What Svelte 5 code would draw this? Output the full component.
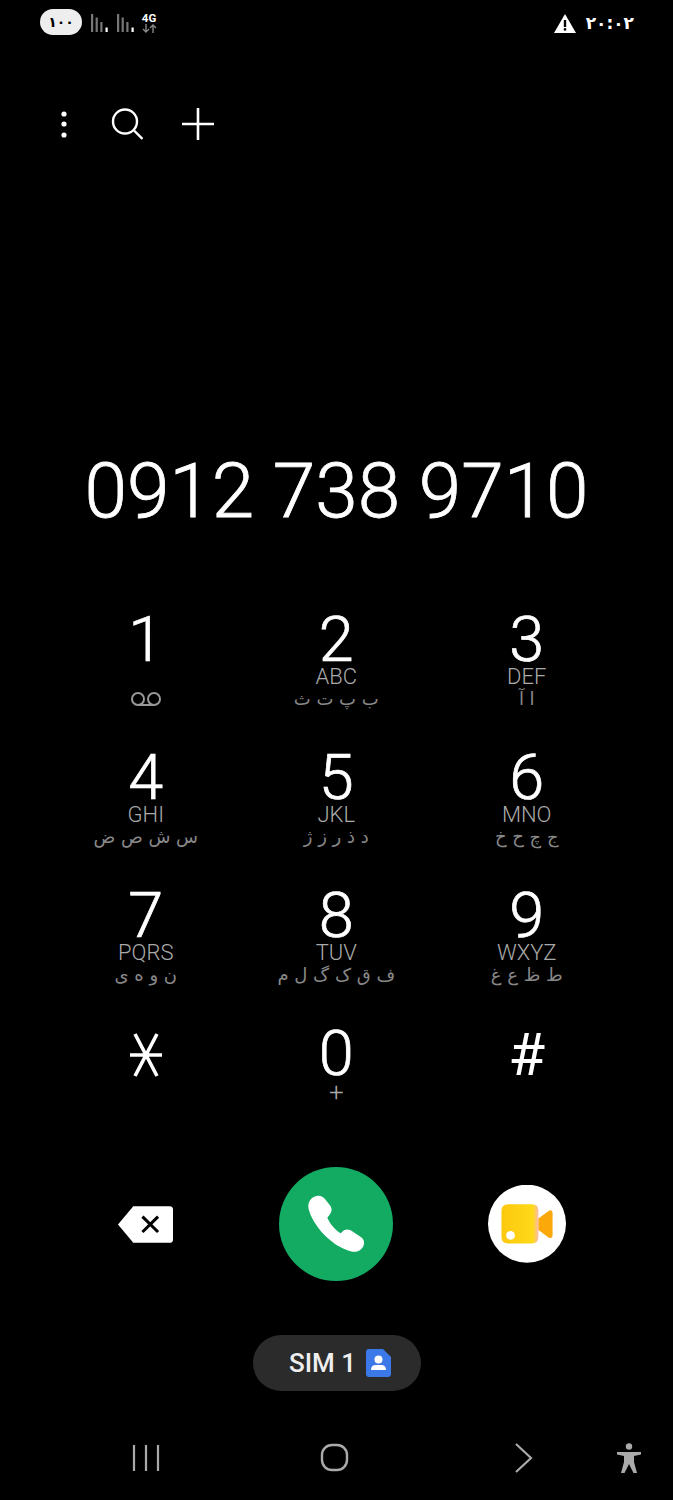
<script>
	const keys = [
		{ digit: "1", letters: "", fa: "", voicemail: true },
		{ digit: "2", letters: "ABC", fa: "ب پ ت ث" },
		{ digit: "3", letters: "DEF", fa: "ا آ" },
		{ digit: "4", letters: "GHI", fa: "س ش ص ض" },
		{ digit: "5", letters: "JKL", fa: "د ذ ر ز ژ" },
		{ digit: "6", letters: "MNO", fa: "ج چ ح خ" },
		{ digit: "7", letters: "PQRS", fa: "ن و ه ی" },
		{ digit: "8", letters: "TUV", fa: "ف ق ک گ ل م" },
		{ digit: "9", letters: "WXYZ", fa: "ط ظ ع غ" }
	];

	const signalBars = [
		{ x: 0, y: 0, h: 18, fill: "#777" },
		{ x: 4.6, y: 3.5, h: 14.5, fill: "#777" },
		{ x: 9.3, y: 8, h: 10, fill: "#777" },
		{ x: 14.5, y: 13.5, h: 4.5, fill: "#fff" }
	];
</script>

<div class="screen">
	<header class="status">
		<div class="status-left">
			<span class="battery">۱۰۰</span>
			{#each [0, 1] as sim}
				<svg class="signal" width="18" height="18" viewBox="0 0 18 18" data-sim={sim}>
					{#each signalBars as bar}
						<rect x={bar.x} y={bar.y} width="2.2" height={bar.h} fill={bar.fill} />
					{/each}
				</svg>
			{/each}
			<div class="network">
				<span>4G</span>
				<svg width="15" height="9" viewBox="0 0 15 9" fill="none" stroke="#888" stroke-width="1.4">
					<path d="M4 0v8M1 5l3 3 3-3" />
					<path d="M11 9V1M8 4l3-3 3 3" />
				</svg>
			</div>
		</div>
		<div class="status-right">
			<svg width="22" height="19" viewBox="0 0 22 19">
				<path d="M11 0 22 19H0z" fill="#fff" />
				<rect x="9.8" y="6" width="2.4" height="7" fill="#000" />
				<rect x="9.8" y="14.2" width="2.4" height="2.4" fill="#000" />
			</svg>
			<span class="clock">۲۰:۰۲</span>
		</div>
	</header>

	<div class="toolbar">
		<svg width="10" height="28" viewBox="0 0 10 28" fill="#fff">
			<circle cx="5" cy="4" r="2.6" />
			<circle cx="5" cy="14" r="2.6" />
			<circle cx="5" cy="25" r="2.6" />
		</svg>
		<svg class="search" width="32" height="32" viewBox="0 0 32 32" fill="none" stroke="#fff" stroke-width="2.4">
			<circle cx="14" cy="13.5" r="12" />
			<path d="M23 22.5 31.5 31" />
		</svg>
		<svg class="plus" width="32" height="32" viewBox="0 0 32 32" fill="none" stroke="#fff" stroke-width="2.6">
			<path d="M16 0v32M0 16h32" />
		</svg>
	</div>

	<div class="number">0912 738 9710</div>

	<div class="keypad">
		{#each keys as key}
			<div class="key">
				<span class="digit">{key.digit}</span>
				<span class="letters">{key.letters}</span>
				{#if key.voicemail}
					<span class="fa">
						<svg width="32" height="14" viewBox="0 0 32 14" fill="none" stroke="#999" stroke-width="2">
							<circle cx="8" cy="7" r="6" />
							<circle cx="24" cy="7" r="6" />
							<path d="M8 13h16" />
						</svg>
					</span>
				{:else}
					<span class="fa" dir="rtl">{key.fa}</span>
				{/if}
			</div>
		{/each}
		<div class="key symbol">
			<svg width="34" height="44" viewBox="0 0 34 44" fill="none" stroke="#fff" stroke-width="3.6">
				<path d="M1 22h32M6 1l22 42M28 1 6 43" />
			</svg>
		</div>
		<div class="key">
			<span class="digit">0</span>
			<span class="letters plus-sign">+</span>
		</div>
		<div class="key symbol">
			<span class="hash">#</span>
		</div>
	</div>

	<div class="actions">
		<div class="action">
			<svg width="55" height="37" viewBox="55 140 162 108">
				<path d="M100 140H207q10 0 10 10V238q0 10-10 10H100L55 194z" fill="#fff" />
				<path d="M127 171 173 216M173 171 127 216" stroke="#000" stroke-width="9" fill="none" />
			</svg>
		</div>
		<div class="action">
			<svg width="114" height="114" viewBox="537 20 342 342">
				<circle cx="708" cy="191" r="171" fill="#13ab62" />
				<path
					d="M650 107C635 110 624 122 625 140C627 158 640 185 664 214C690 243 722 266 757 274C775 277 790 265 792 250C794 240 787 232 778 227L752 210C742 205 733 207 727 214L722 219C705 208 690 190 682 172L690 162C696 153 696 146 692 138L675 116C667 107 658 105 650 107z"
					fill="#fff"
				/>
			</svg>
		</div>
		<div class="action video">
			<svg width="78" height="78" viewBox="1165 78 232 232">
				<defs>
					<linearGradient id="body" x1="0" x2="1" y1="0" y2="0">
						<stop offset="0" stop-color="#fdc80e" />
						<stop offset="0.85" stop-color="#ffd91a" />
						<stop offset="1" stop-color="#fdbcb0" />
					</linearGradient>
				</defs>
				<circle cx="1281" cy="193" r="116" fill="#fff" />
				<path d="M1225 135H1296q19 0 19 19V233q0 19-19 19H1225q-20 0-20-20V155q0-20 20-20z" fill="url(#body)" />
				<path d="M1315 178 1345 155q12-6 12 8V226q0 14-12 8L1315 212z" fill="#fba90a" />
				<circle cx="1232" cy="228" r="13" fill="#fff" />
			</svg>
		</div>
	</div>

	<div class="sim-row">
		<div class="sim">
			<span>SIM 1</span>
			<svg width="25" height="28" viewBox="0 0 25 28">
				<path d="M3 0H17L25 8V25q0 3-3 3H3q-3 0-3-3V3q0-3 3-3z" fill="#3b78e8" />
				<circle cx="12.5" cy="10.5" r="4" fill="#fff" />
				<path d="M5 21q0-5 5-5h5q5 0 5 5z" fill="#fff" />
			</svg>
		</div>
	</div>

	<nav class="nav">
		<div class="nav-item">
			<svg width="28" height="28" viewBox="0 0 28 28" stroke="#aaa" stroke-width="2.2" fill="none">
				<path d="M2 1v26M14 1v26M26 1v26" />
			</svg>
		</div>
		<div class="nav-item back">
			<svg width="30" height="30" viewBox="0 0 30 30" fill="none" stroke="#aaa" stroke-width="2.4">
				<rect x="2" y="2" width="25" height="25" rx="10" />
			</svg>
		</div>
		<div class="nav-item forward">
			<svg width="20" height="30" viewBox="0 0 20 30" fill="none" stroke="#aaa" stroke-width="2.2">
				<path d="M2 1 17 15 2 29" />
			</svg>
		</div>
		<div class="nav-item a11y">
			<svg width="24" height="30" viewBox="0 0 24 30" fill="#aaa">
				<circle cx="12" cy="3.5" r="3.2" />
				<path d="M0 9h24v2.6l-7 1.4v6l3 11h-3.500L12 21l-4.500 9H4l3-11v-6L0 11.600z" />
			</svg>
		</div>
	</nav>
</div>

<style>
	:global(body) {
		background: #000;
	}
	.screen {
		width: 673px;
		height: 1500px;
		background: #000;
		color: #fff;
		font-family: Roboto, "Liberation Sans", sans-serif;
		overflow: hidden;
	}
	.status {
		height: 48px;
		padding: 9px 39px 0 40px;
		box-sizing: border-box;
		display: flex;
		justify-content: space-between;
		align-items: flex-start;
	}
	.status-left {
		display: flex;
		align-items: flex-start;
	}
	.battery {
		width: 42px;
		height: 26px;
		border-radius: 13px;
		background: #eee;
		color: #000;
		font: bold 14px "DejaVu Sans", sans-serif;
		line-height: 26px;
		text-align: center;
	}
	.signal {
		margin: 5px 0 0 9px;
	}
	.signal + .signal {
		margin-left: 7.5px;
	}
	.network {
		margin: 3px 0 0 7px;
		display: flex;
		flex-direction: column;
		align-items: center;
		font-size: 11.5px;
		font-weight: 700;
		line-height: 12px;
	}
	.status-right {
		display: flex;
		align-items: center;
		gap: 10px;
		padding-top: 4px;
	}
	.clock {
		font: bold 17px "DejaVu Sans", sans-serif;
		line-height: 20px;
	}
	.toolbar {
		margin-top: 52px;
		height: 48px;
		padding-left: 59px;
		display: flex;
		align-items: center;
	}
	.search {
		margin-left: 42px;
	}
	.plus {
		margin-left: 39px;
	}
	.number {
		margin-top: 298px;
		height: 89px;
		line-height: 90px;
		text-align: center;
		font-size: 76.5px;
		font-weight: 300;
		-webkit-text-stroke: 0.8px #fff;
	}
	.keypad {
		margin-top: 76px;
		padding-left: 50.5px;
		display: grid;
		grid-template-columns: repeat(3, 190.5px);
		grid-auto-rows: 138px;
	}
	.key {
		display: flex;
		flex-direction: column;
		align-items: center;
	}
	.digit {
		height: 56px;
		line-height: 58px;
		font-size: 63px;
		font-weight: 300;
		-webkit-text-stroke: 0.7px #fff;
	}
	.letters {
		height: 20px;
		line-height: 20px;
		font-size: 22px;
		color: #aaa;
		font-weight: 300;
	}
	.plus-sign {
		font-size: 26px;
		line-height: 23px;
	}
	.fa {
		height: 20px;
		margin-top: 2px;
		line-height: 20px;
		font-family: "DejaVu Sans", sans-serif;
		font-size: 18px;
		color: #888;
		display: flex;
		align-items: center;
	}
	.symbol {
		padding-top: 8px;
	}
	.hash {
		height: 44px;
		line-height: 44px;
		font-size: 60px;
		font-weight: 400;
	}
	.actions {
		margin-top: 4px;
		height: 114px;
		padding-left: 50px;
		display: grid;
		grid-template-columns: repeat(3, 190.5px);
	}
	.action {
		display: flex;
		align-items: center;
		justify-content: center;
	}
	.video {
		padding-left: 2px;
	}
	.sim-row {
		margin-top: 54px;
		display: flex;
		justify-content: center;
	}
	.sim {
		width: 168px;
		height: 56px;
		padding-left: 7px;
		box-sizing: border-box;
		border-radius: 28px;
		background: #2b2b2b;
		display: flex;
		align-items: center;
		justify-content: center;
		gap: 10px;
		font-size: 26px;
		font-weight: 500;
		color: #eee;
	}
	.nav {
		margin-top: 47px;
		height: 40px;
		padding-left: 51px;
		display: flex;
		align-items: center;
	}
	.nav-item {
		width: 190.5px;
		display: flex;
		justify-content: center;
	}
	.back {
		margin-left: -2px;
	}
	.forward {
		margin-left: -1px;
	}
	.a11y {
		width: 24px;
		margin-left: -3px;
	}
</style>
